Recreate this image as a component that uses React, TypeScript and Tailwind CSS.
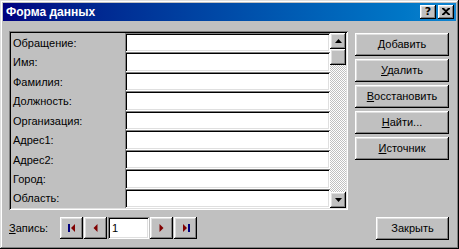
import React from "react";

const raised =
  "shadow-[inset_-1px_-1px_0_#000,inset_1px_1px_0_#fff,inset_-2px_-2px_0_#808080,inset_2px_2px_0_#dfdfdf]";
const sunken =
  "shadow-[inset_1px_1px_0_#808080,inset_-1px_-1px_0_#fff,inset_2px_2px_0_#000,inset_-2px_-2px_0_#dfdfdf]";

const labels = [
  "Обращение:",
  "Имя:",
  "Фамилия:",
  "Должность:",
  "Организация:",
  "Адрес1:",
  "Адрес2:",
  "Город:",
  "Область:",
];

function Btn({ u, rest }: { u?: string; rest: string }) {
  return (
    <div
      className={`w-[94px] h-[23px] flex items-center justify-center bg-[#c0c0c0] ${raised}`}
    >
      <span>
        {u && <span className="underline underline-offset-[1px]">{u}</span>}
        {rest}
      </span>
    </div>
  );
}

function NavBtn({ children }: { children: React.ReactNode }) {
  return (
    <div
      className={`w-[23px] h-[22px] flex items-center justify-center bg-[#c0c0c0] ${raised}`}
    >
      {children}
    </div>
  );
}

export default function App() {
  return (
    <div
      className={`w-[459px] h-[249px] bg-[#c0c0c0] p-[3px] flex flex-col text-[11px] text-black font-['Liberation_Sans',sans-serif] shadow-[inset_-1px_-1px_0_#000,inset_1px_1px_0_#dfdfdf,inset_-2px_-2px_0_#808080,inset_2px_2px_0_#fff]`}
    >
      {/* Title bar */}
      <div className="h-[18px] flex items-center bg-linear-to-r from-[#000080] to-[#1084d0]">
        <span className="pl-[3px] font-bold text-white text-[12px] font-['Liberation_Sans',sans-serif] leading-none">
          Форма данных
        </span>
        <div className="ml-auto flex gap-[2px] pr-[2px]">
          <div
            className={`w-[16px] h-[14px] bg-[#c0c0c0] flex items-center justify-center ${raised}`}
          >
            <span className="font-bold text-[11px] leading-none font-['DejaVu_Sans',sans-serif] -mt-[1px]">
              ?
            </span>
          </div>
          <div
            className={`w-[16px] h-[14px] bg-[#c0c0c0] flex items-center justify-center ${raised}`}
          >
            <svg width="8" height="7" viewBox="0 0 8 7" className="-mt-[1px]">
              <path d="M0 0h2l2 2 2-2h2v1L5 3.5 8 6v1H6L4 5 2 7H0V6l3-2.5L0 1z" fill="#000" />
            </svg>
          </div>
        </div>
      </div>

      {/* Body */}
      <div className="flex mt-[10px] pl-[6px]">
        <div className={`w-[339px] h-[179px] p-[2px] flex ${sunken}`}>
          <div className="w-[114px] flex flex-col">
            {labels.map((l) => (
              <div key={l} className="flex-1 flex items-center pl-[2px] pt-[1px]">
                {l}
              </div>
            ))}
          </div>
          <div className="w-[205px] flex flex-col">
            {labels.map((l) => (
              <div key={l} className={`flex-1 bg-white ${sunken}`} />
            ))}
          </div>
          <div className="w-[16px] flex flex-col">
            <div
              className={`h-[16px] bg-[#c0c0c0] flex items-center justify-center ${raised}`}
            >
              <svg width="7" height="4" viewBox="0 0 7 4">
                <path d="M3.5 0L7 4H0z" fill="#000" />
              </svg>
            </div>
            <div className={`h-[16px] bg-[#c0c0c0] ${raised}`} />
            <div className="flex-1 bg-[image:repeating-conic-gradient(#c0c0c0_0%_25%,#ffffff_0%_50%)] bg-[length:2px_2px]" />
            <div
              className={`h-[16px] bg-[#c0c0c0] flex items-center justify-center ${raised}`}
            >
              <svg width="7" height="4" viewBox="0 0 7 4">
                <path d="M0 0h7L3.5 4z" fill="#000" />
              </svg>
            </div>
          </div>
        </div>

        <div className="ml-[7px] mt-[2px] flex flex-col gap-[3px]">
          <Btn u="Д" rest="обавить" />
          <Btn u="У" rest="далить" />
          <Btn u="В" rest="осстановить" />
          <Btn u="Н" rest="айти..." />
          <Btn u="И" rest="сточник" />
        </div>
      </div>

      {/* Bottom row */}
      <div className="flex items-start mt-[7px] pl-[6px]">
        <div className="w-[51px] h-[22px] flex items-center">
          <span>
            <span className="underline underline-offset-[1px]">З</span>апись:
          </span>
        </div>
        <div className="flex gap-[1px]">
          <NavBtn>
            <svg width="8" height="8" viewBox="0 0 8 8">
              <rect x="0" y="0" width="2" height="8" fill="#000080" />
              <path d="M7 0v8L3 4z" fill="#800000" />
            </svg>
          </NavBtn>
          <NavBtn>
            <svg width="5" height="8" viewBox="0 0 5 8">
              <path d="M4.5 0v8L0.5 4z" fill="#800000" />
            </svg>
          </NavBtn>
          <div className={`w-[41px] h-[22px] bg-white flex items-center pl-[4px] ${sunken}`}>
            1
          </div>
          <NavBtn>
            <svg width="5" height="8" viewBox="0 0 5 8">
              <path d="M0.5 0v8L4.5 4z" fill="#800000" />
            </svg>
          </NavBtn>
          <NavBtn>
            <svg width="8" height="8" viewBox="0 0 8 8">
              <path d="M1 0v8L5 4z" fill="#800000" />
              <rect x="6" y="0" width="2" height="8" fill="#000080" />
            </svg>
          </NavBtn>
        </div>
        <div
          className={`ml-auto mr-[7px] w-[73px] h-[23px] flex items-center justify-center bg-[#c0c0c0] ${raised}`}
        >
          Закрыть
        </div>
      </div>
    </div>
  );
}
